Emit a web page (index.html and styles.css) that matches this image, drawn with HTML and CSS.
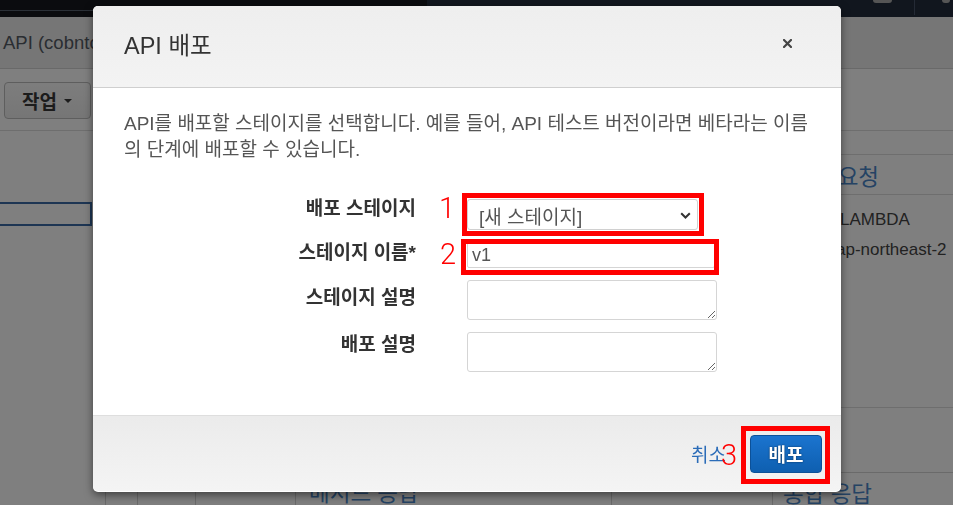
FILE: index.html
```html
<!DOCTYPE html>
<html lang="ko">
<head>
<meta charset="utf-8">
<title>API 배포</title>
<link rel="stylesheet" href="styles.css">
</head>
<body>
<div class="app">
  <div class="nav">
    <div class="nav-left"><div class="nav-left-top"></div></div>
    <div class="nav-right">
      <span class="nav-pill"></span>
      <span class="nav-div"></span>
      <span class="nav-dot"></span>
    </div>
  </div>
  <div class="titlebar"><span class="page-title">API (cobntcl-api)</span></div>
  <div class="toolbar">
    <button class="action-btn">작업 <span class="caret"></span></button>
  </div>
  <div class="stage">
    <div class="stage-top">
      <div class="side"><div class="search-box"></div></div>
      <div class="spacer"></div>
      <div class="req-box">
        <div class="box-head">통합 요청</div>
        <div class="box-body">
          <div class="kv kv-type">LAMBDA</div>
          <div class="kv kv-region">ap-northeast-2</div>
        </div>
      </div>
    </div>
    <div class="stage-bottom">
      <div class="cell c0"></div>
      <div class="cell c1"></div>
      <div class="cell c2"></div>
      <div class="cell c3"></div>
      <div class="cell c4">메서드 응답</div>
      <div class="cell c5"></div>
      <div class="cell c6">통합 응답</div>
    </div>
  </div>
</div>

<div class="backdrop"></div>

<div class="modal">
  <div class="modal-header">
    <h2 class="modal-title">API 배포</h2>
    <button class="close" aria-label="닫기">
      <svg width="9" height="9" viewBox="0 0 9 9"><path d="M1 1L8 8M8 1L1 8" stroke="#444" stroke-width="2.2" stroke-linecap="square"/></svg>
    </button>
  </div>
  <div class="modal-body">
    <p class="intro">API를 배포할 스테이지를 선택합니다. 예를 들어, API 테스트 버전이라면 베타라는 이름<br>의 단계에 배포할 수 있습니다.</p>
    <div class="form">
      <label class="lbl lbl-stage">배포 스테이지</label>
      <div class="select">
        <span>[새 스테이지]</span>
        <svg width="11" height="7" viewBox="0 0 11 7"><path d="M1.2 1.2L5.5 5.5L9.8 1.2" fill="none" stroke="#333" stroke-width="2"/></svg>
      </div>
      <label class="lbl lbl-name" for="name">스테이지 이름*</label>
      <input class="input" id="name" value="v1">
      <label class="lbl lbl-sdesc" for="sdesc">스테이지 설명</label>
      <textarea class="area" id="sdesc"></textarea>
      <label class="lbl lbl-ddesc" for="ddesc">배포 설명</label>
      <textarea class="area" id="ddesc"></textarea>
    </div>
  </div>
  <div class="modal-footer">
    <a class="cancel" href="#">취소</a>
    <button class="primary">배포</button>
  </div>

  <div class="mark mark-1"></div>
  <div class="mark mark-2"></div>
  <div class="mark mark-3"></div>
  <span class="num num-1">1</span>
  <span class="num num-2">2</span>
  <span class="num num-3">3</span>
</div>
</body>
</html>
```

FILE: styles.css
```css
* { box-sizing: border-box; }
html, body { margin: 0; padding: 0; }
body {
  width: 953px;
  height: 505px;
  overflow: hidden;
  position: relative;
  background: #fff;
  font-family: "Liberation Sans", "Noto Sans CJK KR", sans-serif;
}

/* ---------- background page ---------- */
.app { width: 953px; height: 505px; overflow: hidden; }

.nav { height: 17px; display: flex; background: #222c3c; }
.nav-left { width: 427px; background: #16191f; }
.nav-left-top { height: 11px; border-bottom: 1px solid #56606e; }
.nav-right { flex: 1; display: flex; justify-content: flex-end; align-items: flex-start; padding-right: 3px; }
.nav-pill { width: 19px; height: 3px; background: #aaa; border-radius: 0 0 5px 5px; margin-right: 22px; }
.nav-div { width: 1px; height: 15px; background: #48556a; margin-right: 27px; }
.nav-dot { width: 8px; height: 3px; background: #aaa; border-radius: 0 0 4px 4px; }

.titlebar {
  height: 52px;
  background: #ececec;
  border-bottom: 1px solid #d2d2d2;
  display: flex;
  align-items: center;
  padding-left: 3px;
}
.page-title { font-size: 18.5px; color: #545b64; white-space: nowrap; }

.toolbar {
  height: 62px;
  border-bottom: 1px solid #dcdcdc;
  padding: 13px 0 0 4px;
}
.action-btn {
  width: 87px;
  height: 37px;
  border: 1px solid #bcbcbc;
  border-radius: 4px;
  background: linear-gradient(#fbfbfb, #ececec);
  font-family: inherit;
  font-size: 19px;
  font-weight: bold;
  color: #383838;
  display: flex;
  align-items: center;
  padding: 0 0 0 17px;
  gap: 7px;
}
.caret {
  width: 0; height: 0;
  border-left: 4px solid transparent;
  border-right: 4px solid transparent;
  border-top: 4px solid #383838;
}

.stage { height: 374px; }
.stage-top { height: 341px; display: flex; }
.side { width: 92px; padding-top: 71px; }
.search-box { width: 94px; height: 24px; margin-left: -2px; border: 2px solid #3a6aa6; }
.spacer { flex: 1; }
.req-box { width: 175px; margin-top: 23px; border-top: 1px solid #dcdcdc; height: 254px; border-bottom: 1px solid #dcdcdc; }
.box-head {
  height: 40px;
  border-bottom: 1px solid #dcdcdc;
  display: flex;
  align-items: center;
  padding-left: 12px;
  font-size: 22.5px;
  color: #4a86c8;
  white-space: nowrap;
}
.box-body { padding-top: 10px; }
.kv { font-size: 17px; line-height: 30px; color: #444; white-space: nowrap; }
.kv-type { padding-left: 62px; }
.kv-region { padding-left: 58px; }

.stage-bottom { height: 33px; display: flex; }
.cell { border-left: 1px solid #d5d5d5; font-size: 22.5px; color: #4a86c8; padding-top: 3px; white-space: nowrap; }
.c0 { width: 105px; border-left: none; }
.c1 { width: 32px; }
.c2 { width: 58px; }
.c3 { width: 100px; }
.c4 { width: 316px; padding-left: 13px; }
.c5 { width: 161px; }
.c6 { flex: 1; padding-left: 10px; border-top: 1px solid #d5d5d5; }

.backdrop {
  position: fixed;
  inset: 0;
  background: rgba(0, 0, 0, 0.5);
}

/* ---------- modal ---------- */
.modal {
  position: absolute;
  left: 93px;
  top: 6px;
  width: 748px;
  height: 486px;
  background: #fff;
  border-radius: 5px;
  box-shadow: 0 3px 9px rgba(0, 0, 0, 0.5);
  font-size: 19px;
  color: #333;
}

.modal-header {
  height: 82px;
  border-bottom: 1px solid #cfcfcf;
  border-radius: 5px 5px 0 0;
  background: linear-gradient(#eeeeee, #f3f3f3);
  display: flex;
  align-items: center;
  justify-content: space-between;
  padding: 0 49px 6px 31px;
}
.modal-title { margin: 0; font-size: 23.5px; font-weight: normal; color: #333; }
.close { border: 0; background: none; padding: 0; width: 9px; height: 9px; display: flex; }

.modal-body { padding: 23px 31px 43px; }
.intro { margin: 0; font-size: 19px; line-height: 26px; color: #555; white-space: nowrap; }

.form {
  display: grid;
  grid-template-columns: 292px 250px;
  column-gap: 51px;
  row-gap: 12px;
  margin-top: 36px;
}
.lbl { text-align: right; font-weight: bold; font-size: 19px; line-height: 20px; color: #333; white-space: nowrap; }
.lbl-stage { padding-top: 0; }
.lbl-name { padding-top: 1px; }
.lbl-sdesc { padding-top: 8px; }
.lbl-ddesc { padding-top: 3px; }

.select {
  width: 231px;
  height: 31px;
  border: 1px solid #d0d0d0;
  border-radius: 3px;
  display: flex;
  align-items: center;
  justify-content: space-between;
  padding: 1px 6px 0 11px;
  font-size: 19px;
  color: #555;
}
.input {
  width: 248px;
  height: 26px;
  border: 1px solid #d5d5d5;
  border-radius: 2px;
  padding: 0 4px;
  font-family: inherit;
  font-size: 18px;
  color: #555;
  outline: none;
}
.area {
  width: 250px;
  height: 40px;
  border: 1px solid #d5d5d5;
  border-radius: 3px;
  font-family: inherit;
  display: block;
}

.modal-footer {
  height: 76px;
  border-top: 1px solid #dedede;
  border-radius: 0 0 5px 5px;
  background: linear-gradient(#ebebeb, #f4f4f4);
  display: flex;
  justify-content: flex-end;
  align-items: center;
  padding: 0 19px 0 0;
}
.cancel { color: #2b6cb8; text-decoration: none; margin-right: 24px; font-size: 19px; }
.primary {
  width: 72px;
  height: 38px;
  border: 1px solid #0c5199;
  border-radius: 4px;
  background: linear-gradient(#1b74cf, #0e5fb0);
  color: #fff;
  font-family: inherit;
  font-size: 19px;
  font-weight: bold;
  text-shadow: 0 0 2px rgba(0, 0, 0, 0.6);
}

/* ---------- annotation overlays ---------- */
.mark { position: absolute; border: 5px solid #ff0000; }
.mark-1 { left: 369px; top: 187px; width: 242px; height: 43px; }
.mark-2 { left: 368px; top: 233px; width: 258px; height: 36px; }
.mark-3 { left: 648px; top: 420px; width: 89px; height: 58px; }
.num {
  position: absolute;
  font-family: Roboto, "Liberation Sans", sans-serif;
  font-weight: 300;
  font-size: 29px;
  line-height: 29px;
  color: #ff0000;
}
.num-1 { left: 346px; top: 188px; }
.num-2 { left: 347px; top: 234px; }
.num-3 { left: 628px; top: 435px; }
```
